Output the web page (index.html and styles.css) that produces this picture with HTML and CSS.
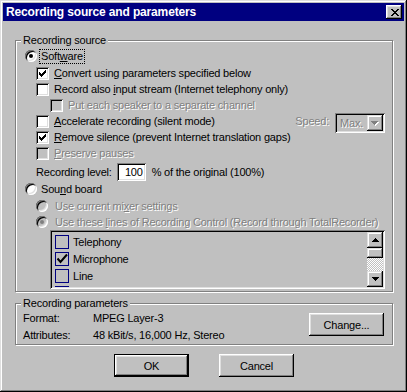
FILE: index.html
```html
<!DOCTYPE html>
<html>
<head>
    <meta charset="utf-8">
    <title>Recording source and parameters</title>
    <link rel="stylesheet" href="styles.css">
</head>
<body>
    <div class="window">
        <div class="titlebar">
            <span class="title">Recording source and parameters</span>
            <span class="close-btn">
                <svg width="8" height="7" viewBox="0 0 8 7"><path d="M0 0h2v1h-2z M6 0h2v1h-2z M1 1h2v1h-2z M5 1h2v1h-2z M2 2h4v1h-4z M3 3h2v1h-2z M2 4h4v1h-4z M1 5h2v1h-2z M5 5h2v1h-2z M0 6h2v1h-2z M6 6h2v1h-2z" fill="#000"/></svg>
            </span>
        </div>

        <div class="client">
            <div class="group source">
                <div class="legend">Recording source</div>

                <div class="row lvl0 gap1">
                    <span class="radio checked"></span>
                    <span class="label focus">Soft<u>w</u>are</span>
                </div>
                <div class="row lvl1 gap1">
                    <span class="check on"></span>
                    <span class="label"><u>C</u>onvert using parameters specified below</span>
                </div>
                <div class="row lvl1">
                    <span class="check"></span>
                    <span class="label">Record also <u>i</u>nput stream (Internet telephony only)</span>
                </div>
                <div class="row lvl2">
                    <span class="check off"></span>
                    <span class="label dis">Put each speaker to a separate channel</span>
                </div>
                <div class="row lvl1">
                    <span class="check"></span>
                    <span class="label"><u>A</u>ccelerate recording (silent mode)</span>
                    <span class="speed-label dis">Speed:</span>
                    <span class="combo">
                        <span class="combo-text dis">Max.</span>
                        <span class="combo-btn">
                            <svg width="8" height="5" viewBox="0 0 8 5"><path d="M1 1h7v1h-7z M2 2h5v1h-5z M3 3h3v1h-3z M4 4h1v1h-1z" fill="#fff"/><path d="M0 0h7v1h-7z M1 1h5v1h-5z M2 2h3v1h-3z M3 3h1v1h-1z" fill="#808080"/></svg>
                        </span>
                    </span>
                </div>
                <div class="row lvl1">
                    <span class="check on"></span>
                    <span class="label"><u>R</u>emove silence (prevent Internet translation gaps)</span>
                </div>
                <div class="row lvl1">
                    <span class="check off"></span>
                    <span class="label dis"><u>P</u>reserve pauses</span>
                </div>
                <div class="row level-row lvl1-text">
                    <span>Recording level:</span>
                    <span class="edit">100</span>
                    <span class="label-after">% of the original (100%)</span>
                </div>
                <div class="row lvl0">
                    <span class="radio"></span>
                    <span class="label sb">Sou<u>n</u>d board</span>
                </div>
                <div class="row lvl1r gap1">
                    <span class="radio off"></span>
                    <span class="label sub dis">Use current mi<u>x</u>er settings</span>
                </div>
                <div class="row lvl1r">
                    <span class="radio off checked"></span>
                    <span class="label sub dis">Use these <u>l</u>ines of Recording Control (Record through TotalRecorder)</span>
                </div>

                <div class="list">
                    <div class="list-items">
                        <div class="item"><span class="lbox"></span>Telephony</div>
                        <div class="item"><span class="lbox on"><svg width="12" height="12" viewBox="0 0 12 12"><path d="M1.5 5.5 L4.5 9 L11 1.5" stroke="#000" stroke-width="2" fill="none"/></svg></span>Microphone</div>
                        <div class="item"><span class="lbox"></span>Line</div>
                        <div class="item"><span class="lbox"></span></div>
                    </div>
                    <div class="scrollbar">
                        <span class="sb-btn">
                            <svg width="7" height="4" viewBox="0 0 7 4"><path d="M3 0h1v1h-1z M2 1h3v1h-3z M1 2h5v1h-5z M0 3h7v1h-7z" fill="#000"/></svg>
                        </span>
                        <span class="sb-thumb"></span>
                        <span class="sb-track"></span>
                        <span class="sb-btn">
                            <svg width="7" height="4" viewBox="0 0 7 4"><path d="M0 0h7v1h-7z M1 1h5v1h-5z M2 2h3v1h-3z M3 3h1v1h-1z" fill="#000"/></svg>
                        </span>
                    </div>
                </div>
            </div>

            <div class="group params">
                <div class="legend">Recording parameters</div>
                <div class="params-body">
                    <div class="params-grid">
                        <div class="prow"><span class="pname">Format:</span><span>MPEG Layer-3</span></div>
                        <div class="prow gap1"><span class="pname">Attributes:</span><span>48 kBit/s, 16,000 Hz, Stereo</span></div>
                    </div>
                    <span class="button change">Change...</span>
                </div>
            </div>

            <div class="actions">
                <span class="button default">OK</span>
                <span class="button">Cancel</span>
            </div>
        </div>
    </div>
</body>
</html>
```

FILE: styles.css
```css
* {
    margin: 0;
    padding: 0;
    box-sizing: border-box;
}

body {
    background: #c0c0c0;
    font-family: "Liberation Sans", Arial, sans-serif;
    font-size: 11px;
    letter-spacing: -0.2px;
    color: #000;
}

.window {
    width: 407px;
    height: 392px;
    padding: 3px;
    background: #c0c0c0;
    box-shadow: inset -1px -1px #000, inset 1px 1px #dfdfdf, inset -2px -2px #808080, inset 2px 2px #fff;
}

.titlebar {
    height: 18px;
    background: #000080;
    display: flex;
    align-items: center;
    justify-content: space-between;
    padding: 0 2px 0 3px;
}

.title {
    color: #fff;
    font-weight: bold;
    font-size: 12px;
    letter-spacing: -0.15px;
}

.close-btn {
    width: 16px;
    height: 14px;
    display: flex;
    align-items: center;
    justify-content: center;
    padding-left: 1px;
    background: #c0c0c0;
    box-shadow: inset -1px -1px #000, inset 1px 1px #fff, inset -2px -2px #808080, inset 2px 2px #dfdfdf;
}

.client {
    padding: 0 11px 0 12px;
}

/* etched group box */
.group {
    border: 1px solid #808080;
    box-shadow: 1px 1px 0 #fff, inset 1px 1px 0 #fff;
}

.source {
    margin-top: 19px;
    padding-bottom: 2px;
}

.params {
    margin-top: 11px;
    padding-bottom: 1px;
}

.legend {
    margin: -7px 0 0 5px;
    padding: 0 2px;
    width: max-content;
    height: 13px;
    line-height: 13px;
    background: #c0c0c0;
}

.row {
    height: 16px;
    display: flex;
    align-items: center;
    white-space: nowrap;
}

.gap1 {
    margin-top: 1px;
}

.lvl0 {
    padding-left: 9px;
}

.lvl1 {
    padding-left: 20px;
}

.lvl1r {
    padding-left: 20px;
}

.lvl2 {
    padding-left: 34px;
}

.lvl1-text {
    padding-left: 20px;
}

.label {
    margin-left: 5px;
}

.label.focus {
    margin-left: 3px;
    padding: 0 1px;
    line-height: 13px;
    outline: 1px dotted #000;
}

.label.sb {
    margin-left: 4px;
}

.label.sub {
    margin-left: 7px;
}

.dis {
    color: #808080;
    text-shadow: 1px 1px 0 #fff;
}

/* radio buttons */
.radio {
    flex: none;
    width: 12px;
    height: 12px;
    border-radius: 50%;
    background: #fff;
    display: flex;
    align-items: center;
    justify-content: center;
    box-shadow: inset 1px 1px #808080, inset -1px -1px #fff, inset 2px 2px #000, inset -2px -2px #dfdfdf;
}

.radio.off {
    background: #c0c0c0;
}

.radio.checked::after {
    content: "";
    width: 4px;
    height: 4px;
    border-radius: 50%;
    background: #000;
}

.radio.off.checked::after {
    background: #808080;
}

/* check boxes */
.check {
    flex: none;
    width: 13px;
    height: 13px;
    background: #fff;
    box-shadow: inset 1px 1px #808080, inset -1px -1px #fff, inset 2px 2px #000, inset -2px -2px #dfdfdf;
}

.check.off {
    background: #c0c0c0;
}

.check.on {
    background: #fff url("data:image/svg+xml,%3Csvg xmlns='http://www.w3.org/2000/svg' width='7' height='7'%3E%3Cpath d='M6 0h1v1h-1z M5 1h2v1h-2z M0 2h1v1h-1z M4 2h3v1h-3z M0 3h2v1h-2z M3 3h3v1h-3z M0 4h5v1h-5z M1 5h3v1h-3z M2 6h1v1h-1z' fill='%23000'/%3E%3C/svg%3E") no-repeat 3px 3px;
}

/* speed combo */
.speed-label {
    margin-left: auto;
    margin-right: 6px;
}

.combo {
    align-self: flex-start;
    width: 50px;
    height: 20px;
    margin-right: 7px;
    padding: 2px;
    display: flex;
    justify-content: space-between;
    background: #c0c0c0;
    box-shadow: inset 1px 1px #808080, inset -1px -1px #fff, inset 2px 2px #000, inset -2px -2px #dfdfdf;
}

.combo-text {
    padding-left: 3px;
    line-height: 16px;
}

.combo-btn {
    width: 16px;
    height: 16px;
    display: flex;
    align-items: center;
    justify-content: center;
    padding-top: 1px;
    box-shadow: inset -1px -1px #000, inset 1px 1px #dfdfdf, inset -2px -2px #808080, inset 2px 2px #fff;
}

/* recording level */
.level-row {
    margin-top: 2px;
    height: 18px;
}

.edit {
    width: 29px;
    height: 18px;
    margin: 0 6px 0 5px;
    padding-right: 3px;
    text-align: right;
    line-height: 18px;
    background: #fff;
    box-shadow: inset 1px 1px #808080, inset -1px -1px #fff, inset 2px 2px #000, inset -2px -2px #dfdfdf;
}

/* list of recording lines */
.list {
    margin-left: 34px;
    width: 335px;
    height: 59px;
    padding: 2px;
    display: flex;
    background: #c0c0c0;
    box-shadow: inset 1px 1px #808080, inset -1px -1px #fff, inset 2px 2px #000, inset -2px -2px #dfdfdf;
}

.list-items {
    flex: 1;
    padding: 1px 0 0 3px;
    overflow: hidden;
}

.item {
    height: 17px;
    display: flex;
    align-items: center;
}

.lbox {
    flex: none;
    width: 14px;
    height: 14px;
    margin-right: 4px;
    border: 1px solid #000080;
    display: flex;
}

.scrollbar {
    width: 16px;
    display: flex;
    flex-direction: column;
}

.sb-btn {
    flex: none;
    height: 16px;
    display: flex;
    align-items: center;
    justify-content: center;
    background: #c0c0c0;
    box-shadow: inset -1px -1px #000, inset 1px 1px #dfdfdf, inset -2px -2px #808080, inset 2px 2px #fff;
}

.sb-thumb {
    flex: none;
    height: 10px;
    background: #c0c0c0;
    box-shadow: inset -1px -1px #000, inset 1px 1px #dfdfdf, inset -2px -2px #808080, inset 2px 2px #fff;
}

.sb-track {
    flex: 1;
    background: repeating-conic-gradient(#fff 0 25%, #c0c0c0 0 50%) 0 0 / 2px 2px;
}

/* recording parameters */
.params-body {
    display: flex;
    justify-content: space-between;
    align-items: flex-start;
}

.params-grid {
    padding-left: 7px;
}

.prow {
    height: 16px;
    display: flex;
    align-items: center;
}

.pname {
    width: 70px;
}

.button {
    width: 75px;
    height: 23px;
    display: flex;
    align-items: center;
    justify-content: center;
    background: #c0c0c0;
    box-shadow: inset -1px -1px #000, inset 1px 1px #fff, inset -2px -2px #808080, inset 2px 2px #dfdfdf;
}

.button.change {
    margin: 3px 8px 0 0;
}

.button.default {
    border: 1px solid #000;
}

.actions {
    margin-top: 9px;
    display: flex;
    justify-content: center;
    gap: 30px;
}
```
